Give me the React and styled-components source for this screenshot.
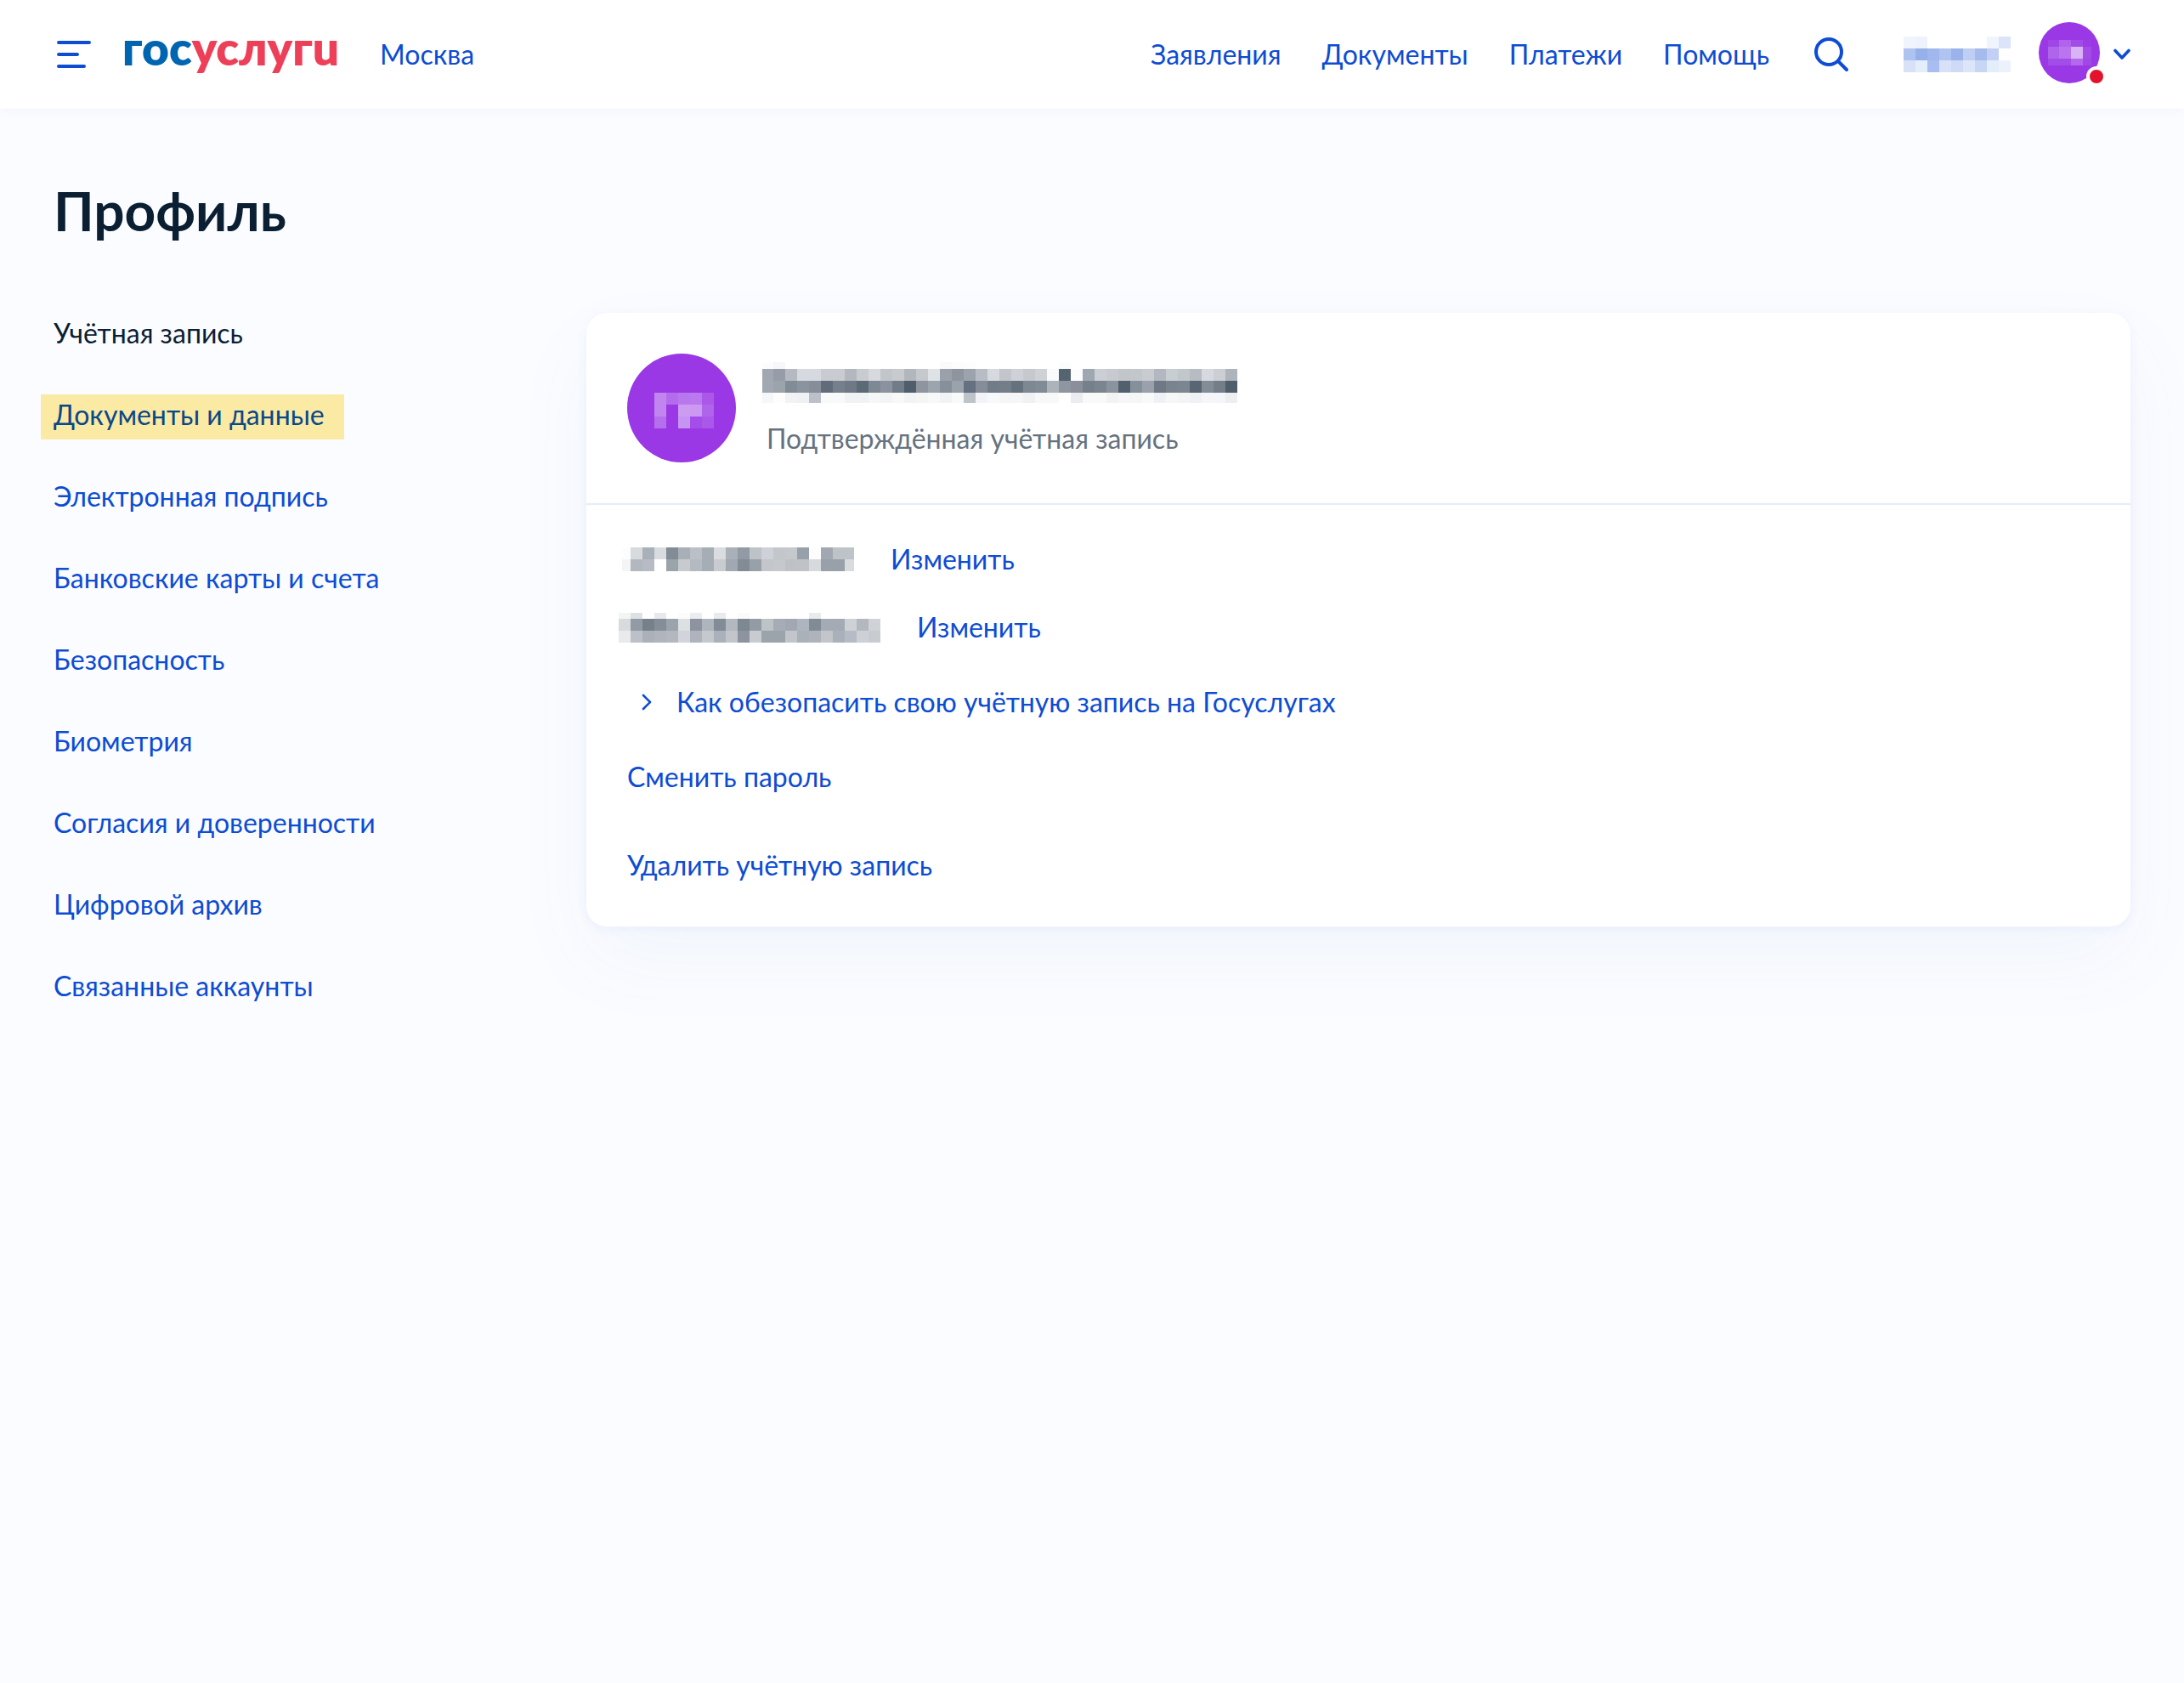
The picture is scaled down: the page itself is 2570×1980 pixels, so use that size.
import styled, { createGlobalStyle } from "styled-components";
import { Fragment } from "react";

const navItems = ["Заявления", "Документы", "Платежи", "Помощь"];

const menuItems = [
    { title: "Учётная запись", current: true },
    { title: "Документы и данные", marked: true },
    { title: "Электронная подпись" },
    { title: "Банковские карты и счета" },
    { title: "Безопасность" },
    { title: "Биометрия" },
    { title: "Согласия и доверенности" },
    { title: "Цифровой архив" },
    { title: "Связанные аккаунты" },
];

// Hidden personal data: column widths, row heights and cell colours ("-" is an empty cell)
const userMask = {
    cols: Array(9).fill(14),
    rows: [14, 14, 14],
    cells: [
        "f1f4fd edf2fd - - - - - f0f4fd dbe4f9",
        "afc3f0 96b0ea a2b8ed b0c4f1 9ab3eb bfcff4 a5baed c1d0f4 -",
        "d7e1f8 e4edfa a8bef0 d7e1f9 cfdbf6 dde6f9 c8d6f5 e4edfa ecf1fc",
    ],
};

const smallAvatarMask = {
    cols: [13, 14, 14, 10],
    rows: [8, 14, 8],
    cells: [
        "a046e6 b064eb a14ce8 9c3ce5",
        "b064eb ba74ef d9b3f5 a34de6",
        "a34de8 a34de8 b468ed a147e6",
    ],
};

const avatarMask = {
    cols: Array(5).fill(14),
    rows: [14, 14, 14],
    cells: [
        "c185f0 b46cec b977ed ba79ee ab58e9",
        "c185f0 - cc9bf2 cb99f2 b064eb",
        "b56eec - c894f1 a44de8 aa58e9",
    ],
};

const nameMask = {
    cols: [13, ...Array(39).fill(14)],
    rows: [8, 14, 14, 12],
    cells: [
        "fcfcfd f5f7fa - - - - - - - - - - - - - fafafb fcfcfc fdfdfd - - - - - - - fbfdfc - - - - - - - - - - - - - -",
        "a1a8b1 969da8 b5b9c1 d6d9df d6d9df c8cbcf c8cbcf b3b7c0 c8cccf d6d9de c2c5ca c7cbce b2b7bd c5c8cc dfe3e6 9aa1ab 8f959f 9da3ad b8bcc5 d6dade c2c6ca ced1d7 c5c8cd ced1d6 f9fafc 556471 fdfdfd 9fa7b0 cbced3 c7cacf c2c6cb c2c7cb c8cbd0 b3b7c0 c8cdd1 c2c7cb b7bbc2 d6d9df cbced3 afb4bc",
        "a1a8b1 9ba3ab 828c97 8a949e 878d99 616c7b 75808a 6f7885 5c6a77 7e8994 8b929e 707c87 505e6b 8e959f 9ca5ae 85909b 9aa3ab 657080 878c99 707c88 737e89 65717d 7d8893 808b95 acb3ba 9096a1 8a8f9b 76808b 7b8590 8a949e 52606d 85909b 9aa1aa 6e7985 7a848f 7b8691 586673 838d98 737e89 4f5e6b",
        "f6f7f9 fdfdfd f2f3f4 f0f1f3 bcc1c9 f8f9f9 f8faf9 f1f2f4 f1f2f4 f6f7f7 f3f4f6 f8f8f8 f2f3f4 f4f5f5 f7f8fa f2f3f6 f8faf9 bdc3c7 f3f4f7 f8f9fc f5f6f5 f6f6f7 f0f1f3 f7f9f8 f7f9f8 - ebecef f8f9f9 f9f9f9 f4f3f4 f7f7f9 f5f7f6 f8f9f9 f0f1f4 f6f8f7 f3f4f4 f0f1f4 f6f6f9 f5f6f9 edeef0",
    ],
};

const contacts = [
    {
        id: "phone",
        inset: 6,
        mask: {
            cols: [10, ...Array(18).fill(14), 11],
            rows: [14, 14],
            cells: [
                "fcfefd d7dbde a8b0b9 d8dbdf 828c97 a8afb7 bbbfc8 a5adb5 dadce0 a9b0b8 929aa5 bec3c8 ced1d7 c3c7cc c5c8cd 98a0aa fdfdfd a1a8b1 bec3c8 bec3c8",
                "f4f5f5 b3b7c0 b7bbc4 - 9ba3ab c7cbcf b5b9c2 a5adb5 c8cbd0 a1a8b1 828c97 98a0aa c3c7cb c5c9cd bec2c6 bfc3c8 d6dadd 98a0aa 98a0aa d8dcdf",
            ],
        },
    },
    {
        id: "email",
        inset: 10,
        mask: {
            cols: Array(22).fill(14),
            rows: [7, 14, 14],
            cells: [
                "f3f4f4 dde1e4 - e7e9ea - fcfcfc ebedee - e8eaeb - fafafa - - - - - e8eaeb - - - - -",
                "d7dbde 929aa5 75808a 848e98 9ba3ab dce0e3 8d949f afb5bd 828c97 b3b7c0 7e8892 939ba5 bec3c7 a5acb5 a1a8b1 afb5be 818b96 a5abb5 a5abb5 ced1d6 b3b7c0 cfd2d7",
                "e9eaeb bcc0c8 abb1b9 b0b5bd b3b7c0 d1d4da afb4bc c5c8cd abb1ba c2c6cb 8d949f c8ccd0 9ba3ab 9ba3ab c2c6ca abb1b8 afb3bb c2c6ca abb1ba b7bbc5 cdd0d5 c8cbd0",
            ],
        },
    },
];

const Mosaic = ({ mask }) => {
    const offset = (sizes, index) => sizes.slice(0, index).reduce((sum, size) => sum + size, 0);
    return(
        <MosaicSvg
        width={offset(mask.cols, mask.cols.length)}
        height={offset(mask.rows, mask.rows.length)}
        aria-hidden="true"
        >
            {mask.cells.map((row, y) => (
                <Fragment key={y}>
                    {row.split(" ").map((color, x) => color !== "-" && (
                        <rect
                        key={x}
                        x={offset(mask.cols, x)}
                        y={offset(mask.rows, y)}
                        width={mask.cols[x]}
                        height={mask.rows[y]}
                        fill={`#${color}`}
                        />
                    ))}
                </Fragment>
            ))}
        </MosaicSvg>
    )
}

const Header = () => {
    return(
        <HeaderBar>
            <IconButton aria-label="Меню">
                <svg width="40" height="32" viewBox="0 0 40 32" fill="none" stroke="currentColor" strokeWidth="4" strokeLinecap="round">
                    <path d="M2 2H38M2 16H24M2 30H32" />
                </svg>
            </IconButton>
            <Logo href="#" aria-label="Госуслуги">
                гос<LogoRed>услугu</LogoRed>
            </Logo>
            <StyledLink href="#">Москва</StyledLink>
            <Nav>
                {navItems.map((item) => <StyledLink href="#" key={item}>{item}</StyledLink>)}
            </Nav>
            <SearchButton aria-label="Поиск">
                <svg width="42" height="42" viewBox="0 0 42 42" fill="none" stroke="currentColor" strokeWidth="4" strokeLinecap="round">
                    <circle cx="18" cy="18" r="15" />
                    <path d="M29 29L39 39" />
                </svg>
            </SearchButton>
            <UserButton aria-label="Профиль пользователя">
                <Mosaic mask={userMask} />
                <SmallAvatar>
                    <Mosaic mask={smallAvatarMask} />
                    <Badge />
                </SmallAvatar>
                <svg width="20" height="14" viewBox="0 0 20 14" fill="none" stroke="currentColor" strokeWidth="3.6" strokeLinecap="round" strokeLinejoin="round">
                    <path d="M2 2.5L10 11L18 2.5" />
                </svg>
            </UserButton>
        </HeaderBar>
    )
}

const App = () => {
    return(
        <>
            <GlobalStyle />
            <Header />
            <Main>
                <StyledTitle>Профиль</StyledTitle>
                <Content>
                    <Sidebar>
                        {menuItems.map(({ title, current, marked }) => (
                            <MenuLink
                            href="#"
                            key={title}
                            $current={current}
                            $marked={marked}
                            >
                                {title}
                            </MenuLink>
                        ))}
                    </Sidebar>
                    <Card>
                        <CardHeader>
                            <Avatar>
                                <Mosaic mask={avatarMask} />
                            </Avatar>
                            <UserInfo>
                                <Mosaic mask={nameMask} />
                                <Status>Подтверждённая учётная запись</Status>
                            </UserInfo>
                        </CardHeader>
                        <CardBody>
                            <Contacts>
                                {contacts.map(({ id, inset, mask }) => (
                                    <ContactRow key={id} $inset={inset}>
                                        <Mosaic mask={mask} />
                                        <LinkButton>Изменить</LinkButton>
                                    </ContactRow>
                                ))}
                            </Contacts>
                            <Disclosure>
                                <svg width="12" height="20" viewBox="0 0 12 20" fill="none" stroke="currentColor" strokeWidth="2.6" strokeLinecap="round" strokeLinejoin="round">
                                    <path d="M2 2L10 10L2 18" />
                                </svg>
                                Как обезопасить свою учётную запись на Госуслугах
                            </Disclosure>
                            <Actions>
                                <StyledLink href="#">Сменить пароль</StyledLink>
                                <StyledLink href="#">Удалить учётную запись</StyledLink>
                            </Actions>
                        </CardBody>
                    </Card>
                </Content>
            </Main>
        </>
    )
}

const GlobalStyle = createGlobalStyle`
    * {
        box-sizing: border-box;
    }
    body {
        margin: 0;
        min-height: 100vh;
        background: #fbfcff;
        color: #0b1f33;
        font-family: Lato, "Open Sans", sans-serif;
        font-size: 32px;
        line-height: 48px;
    }
    button {
        padding: 0;
        border: none;
        background: none;
        color: #0d4cd3;
        font: inherit;
        cursor: pointer;
    }
    svg {
        display: block;
        flex: none;
    }
`

const MosaicSvg = styled.svg`
    shape-rendering: crispEdges;
`

const HeaderBar = styled.header`
    display: flex;
    align-items: center;
    height: 128px;
    padding: 0 63px;
    background: #fff;
    box-shadow: 0 0 16px rgba(60, 100, 220, 0.06);
`

const IconButton = styled.button`
    padding: 0 4px;
`

const Logo = styled.a`
    margin-left: 33px;
    padding-bottom: 16px;
    color: #0065b1;
    font-size: 55px;
    font-weight: 800;
    text-decoration: none;
`

const LogoRed = styled.span`
    color: #ee3f58;
`

const StyledLink = styled.a`
    color: #0d4cd3;
    text-decoration: none;
    white-space: nowrap;

    ${Logo} + & {
        margin-left: 48px;
    }
`

const Nav = styled.nav`
    display: flex;
    gap: 48px;
    margin-left: auto;
`

const SearchButton = styled(IconButton)`
    margin-left: 48px;
`

const UserButton = styled.button`
    display: flex;
    align-items: center;
    margin-left: 60px;

    & > svg:last-child {
        margin-left: 16px;
    }
`

const Avatar = styled.div`
    position: relative;
    display: flex;
    align-items: center;
    justify-content: center;
    flex: none;
    width: 128px;
    height: 128px;
    padding: 6px 0 0 6px;
    border-radius: 50%;
    background: #9b38e5;
`

const SmallAvatar = styled(Avatar)`
    width: 72px;
    height: 72px;
    margin: 0 0 4px 33px;
    padding: 0;
`

const Badge = styled.span`
    position: absolute;
    right: -8px;
    bottom: -4px;
    width: 24px;
    height: 24px;
    border: 4px solid #fff;
    border-radius: 50%;
    background: #e3132d;
`

const Main = styled.main`
    padding: 80px 63px;
`

const StyledTitle = styled.h1`
    margin: 0 0 80px;
    font-size: 64px;
    font-weight: 700;
    line-height: 80px;
`

const Content = styled.div`
    display: flex;
    align-items: flex-start;
`

const Sidebar = styled.nav`
    display: flex;
    flex-direction: column;
    align-items: flex-start;
    gap: 48px;
    flex: none;
    width: 627px;
`

const MenuLink = styled.a`
    color: ${({ $current }) => ($current ? "#0b1f33" : "#0d4cd3")};
    text-decoration: none;
    ${({ $marked }) => $marked && `
        margin: 0 -23px -5px -15px;
        padding: 0 23px 5px 15px;
        background: #faeaa3;
        color: #0c4788;
    `}
`

const Card = styled.section`
    flex: 1;
    min-width: 0;
    border-radius: 24px;
    background: #fff;
    box-shadow: 0 2px 12px rgba(50, 120, 240, 0.07), 0 40px 96px rgba(50, 110, 190, 0.05);
`

const CardHeader = styled.div`
    display: flex;
    gap: 31px;
    padding: 48px;
    border-bottom: 2px solid #e4ecfd;
`

const UserInfo = styled.div`
    display: flex;
    flex-direction: column;
    gap: 18px;
    padding-top: 10px;
`

const Status = styled.div`
    padding-left: 5px;
    color: #66727f;
`

const CardBody = styled.div`
    display: flex;
    flex-direction: column;
    align-items: flex-start;
    gap: 40px;
    padding: 40px 48px 48px;
`

const Contacts = styled.div`
    display: flex;
    flex-direction: column;
    gap: 32px;
`

const ContactRow = styled.div`
    display: flex;
    align-items: center;
    gap: 43px;
    height: 48px;
    margin-left: -${({ $inset }) => $inset}px;
`

const LinkButton = styled.button`
    white-space: nowrap;
`

const Disclosure = styled.button`
    display: flex;
    align-items: center;
    gap: 29px;
    padding-left: 17px;
    text-align: left;
`

const Actions = styled.div`
    display: flex;
    flex-direction: column;
    align-items: flex-start;
    gap: 56px;
`

export default App;
